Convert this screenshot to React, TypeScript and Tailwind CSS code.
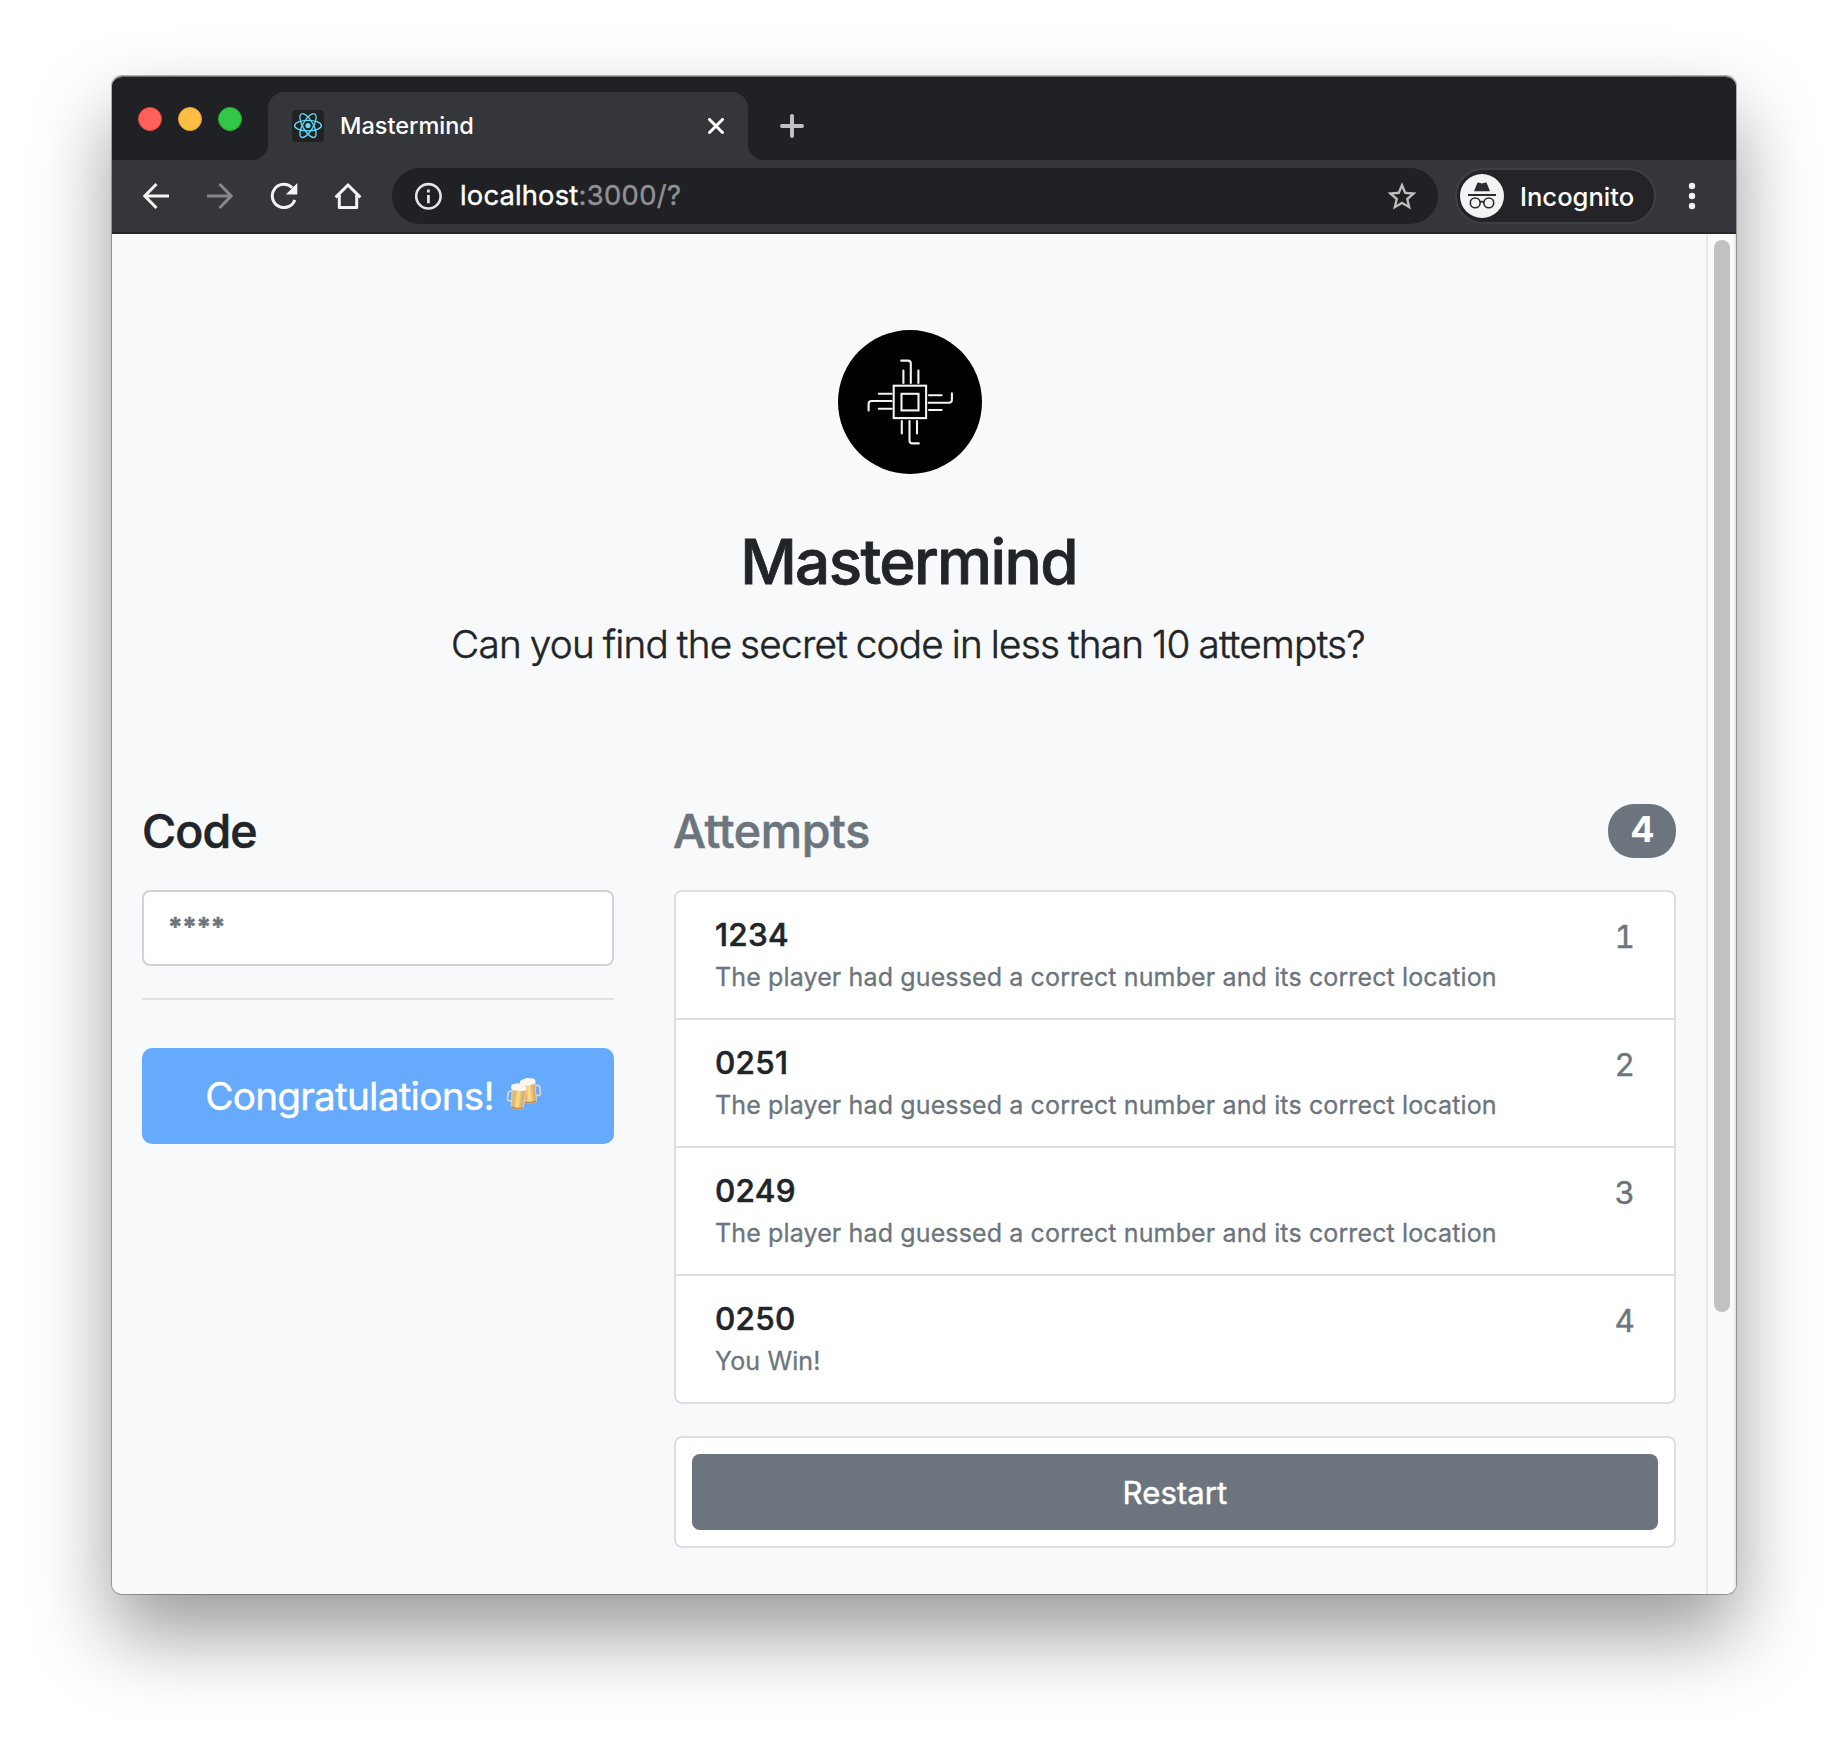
import React from "react";

type Attempt = { code: string; result: string };

const HIT = "The player had guessed a correct number and its correct location";

const attempts: Attempt[] = [
  { code: "1234", result: HIT },
  { code: "0251", result: HIT },
  { code: "0249", result: HIT },
  { code: "0250", result: "You Win!" },
];

function ReactFavicon() {
  return (
    <svg className="h-8 w-8 shrink-0" viewBox="0 0 32 32" fill="none">
      <rect width="32" height="32" rx="4" fill="#222222" />
      <g stroke="#61dafb" strokeWidth="1.35">
        <ellipse cx="16" cy="15.6" rx="13.4" ry="5.2" />
        <ellipse cx="16" cy="15.6" rx="13.4" ry="5.2" transform="rotate(60 16 15.6)" />
        <ellipse cx="16" cy="15.6" rx="13.4" ry="5.2" transform="rotate(120 16 15.6)" />
      </g>
      <circle cx="16" cy="15.6" r="2.6" fill="#61dafb" />
    </svg>
  );
}

function BackIcon() {
  return (
    <svg className="h-7 w-7 shrink-0" viewBox="0 0 28 28" fill="none" stroke="#f1f3f4" strokeWidth="3">
      <path d="M27 14H3M14.5 2 2.8 14l11.7 12" />
    </svg>
  );
}

function ForwardIcon() {
  return (
    <svg className="h-7 w-7 shrink-0" viewBox="0 0 28 28" fill="none" stroke="#86878a" strokeWidth="3">
      <path d="M1 14h24M13.5 2l11.7 12-11.7 12" />
    </svg>
  );
}

function ReloadIcon() {
  return (
    <svg className="h-7 w-7 shrink-0" viewBox="0 0 28 28" fill="none">
      <path d="M24.8 17.9A11.6 11.6 0 1 1 22.2 5.8" stroke="#f1f3f4" strokeWidth="3" />
      <path d="M27.3 1v11.6H15.8z" fill="#f1f3f4" />
    </svg>
  );
}

function HomeIcon() {
  return (
    <svg className="h-7 w-7 shrink-0" viewBox="0 0 28 28" fill="none" stroke="#f1f3f4" strokeWidth="3">
      <path d="M1.6 15.4 14 3l12.4 12.4" strokeLinejoin="miter" />
      <path d="M5.3 13v12.5h17.4V13" strokeLinejoin="round" />
    </svg>
  );
}

function InfoIcon() {
  return (
    <svg className="h-7 w-7 shrink-0" viewBox="0 0 28 28" fill="none">
      <circle cx="14.4" cy="14.3" r="12.2" stroke="#e3e4e6" strokeWidth="2.6" />
      <path d="M14.4 12.9v8.3M14.4 7.4v3" stroke="#e3e4e6" strokeWidth="2.8" />
    </svg>
  );
}

function StarIcon() {
  return (
    <svg className="h-8 w-8 shrink-0" viewBox="0 0 24 24" fill="#bdbdbd">
      <path d="M22.9 9.4l-7.9-.68L12 1.5 9 8.73 1.1 9.4l5.98 5.18L5.3 22.2 12 18.17l6.7 4.03-1.77-7.62L22.9 9.4zM12 16.1l-4.03 2.43 1.07-4.58-3.55-3.08 4.68-.41L12 6.15l1.84 4.32 4.68.41-3.55 3.08 1.07 4.58L12 16.1z" />
    </svg>
  );
}

function IncognitoIcon() {
  return (
    <svg className="h-11 w-11 shrink-0" viewBox="0 0 44 44" fill="none">
      <circle cx="22" cy="22" r="22" fill="#f1f3f4" />
      <path d="M14 17.2 17.3 9q.3-.7 1-.6l3.7 1 3.7-1q.7-.1 1 .6L30 17.2z" fill="#2b2c2f" />
      <path d="M8 21h28" stroke="#2b2c2f" strokeWidth="1.9" />
      <g stroke="#2b2c2f" strokeWidth="1.6">
        <circle cx="15.2" cy="28.9" r="4.9" />
        <circle cx="28.8" cy="28.9" r="4.9" />
        <path d="M20 28.2q2-1.1 4 0" />
      </g>
    </svg>
  );
}

function ChipLogo() {
  return (
    <svg className="h-36 w-36" viewBox="0 0 144 144" fill="none">
      <circle cx="72" cy="72" r="72" fill="#000" />
      <g stroke="#f1f4f4" strokeWidth="2.1">
        <rect x="55.7" y="55.7" width="32.4" height="32.4" />
        <rect x="63.5" y="63.8" width="17" height="16.6" />
      </g>
      <g stroke="#f1f4f4" strokeWidth="2.1" strokeLinecap="round" strokeLinejoin="round">
        <path d="M65.4 40.5V53M72.8 53V33.6q0-3-3-3H63.2M80.4 40.5V53" />
        <path d="M91 65.3h12.6M90.7 72.7h20.2q3 0 3-3V63.4M91 80h12.6" />
        <path d="M63.8 91v12.4M71.5 91v19.4q0 3 3 3h6.3M79 91v12.4" />
        <path d="M53.6 63.8H40.8M53.6 71H33.6q-3 0-3 3v6.4M53.6 78.7H40.8" />
      </g>
    </svg>
  );
}

function BeersIcon() {
  return (
    <svg className="h-10 w-[46px] shrink-0" viewBox="-1 -1 49 43" fill="none">
      <defs>
        <linearGradient id="beer" x1="0" x2="1" y1="0" y2="0">
          <stop offset="0" stopColor="#d9b98c" />
          <stop offset=".25" stopColor="#e6b765" />
          <stop offset=".5" stopColor="#fbe09a" />
          <stop offset=".75" stopColor="#e8b868" />
          <stop offset="1" stopColor="#c59f74" />
        </linearGradient>
      </defs>
      <g transform="rotate(-6 25 16)">
        <path d="M31.500 10h3q2.200 0 2.200 2.200v6.400q0 2.200-2.200 2.200h-3" stroke="#dcd7c8" strokeWidth="1.800" />
        <path d="M17.500 7h14.500l-.500 20.500q-6 1.600-12.700 0z" fill="url(#beer)" stroke="#ddd2bd" strokeWidth="1" />
        <path d="M18.800 26q6.500 1.500 12.600 0v1.700q-6 1.600-12.600 0z" fill="#b58a58" />
        <path d="M16.400 7.500q-1.800-4.800 2.800-5.300 4.300-2.400 8-.5 6.300.3 5.400 5-1.400 2.300-4.200 1.600-3 1.400-6 .2-3.600 1.800-6-1z" fill="#faf7f2" />
      </g>
      <g transform="rotate(7 13 22)">
        <path d="M6 16.500H4q-2.300 0-2.300 2.200v6q0 2.200 2.300 2.200H6" stroke="#dcd7c8" strokeWidth="1.800" />
        <path d="M5.500 13h14.500l-.500 21q-6.200 1.600-12.700 0z" fill="url(#beer)" stroke="#ddd2bd" strokeWidth="1" />
        <path d="M6.800 32.400q6.500 1.500 12.700 0v1.800q-6.300 1.600-12.700 0z" fill="#b58a58" />
        <path d="M4.400 13.500q-1.800-4.800 2.800-5.300 4.300-2.400 8-.5 6.300.3 5.400 5-1.400 2.300-4.200 1.600-3 1.400-6 .2-3.600 1.800-6-1z" fill="#faf7f2" />
      </g>
    </svg>
  );
}

function TabStrip() {
  return (
    <div className="flex h-21 items-end bg-[#202124]">
      <div className="flex h-21 w-35 items-center gap-4 pl-[26px] pt-px">
        <span className="h-6 w-6 rounded-full border border-[#e2463f] bg-[#ff605c]" />
        <span className="h-6 w-6 rounded-full border border-[#dfa034] bg-[#ffbd44]" />
        <span className="h-6 w-6 rounded-full border border-[#1fae34] bg-[#33c748]" />
      </div>
      <div className="h-4 w-4 bg-[#35363a]">
        <div className="h-4 w-4 rounded-br-2xl bg-[#202124]" />
      </div>
      <div className="flex h-17 w-[480px] items-center rounded-t-2xl bg-[#35363a] px-6">
        <ReactFavicon />
        <span className="ml-4 flex-1 text-[23.5px] font-medium leading-8 text-white">Mastermind</span>
        <svg className="h-4 w-4" viewBox="0 0 16 16" fill="none" stroke="#fff" strokeWidth="3" strokeLinecap="round">
          <path d="M1.5 1.5l13 13M14.5 1.5l-13 13" />
        </svg>
      </div>
      <div className="h-4 w-4 bg-[#35363a]">
        <div className="h-4 w-4 rounded-bl-2xl bg-[#202124]" />
      </div>
      <div className="flex h-17 items-center pl-4">
        <svg className="h-6 w-6" viewBox="0 0 24 24" fill="none" stroke="#bdc1c6" strokeWidth="4" strokeLinecap="round">
          <path d="M12 2v20M2 12h20" />
        </svg>
      </div>
    </div>
  );
}

function Toolbar() {
  return (
    <div className="flex h-[74px] items-center border-b-2 border-[#292729] bg-[#35363a] pl-[30px]">
      <div className="flex items-center gap-9">
        <BackIcon />
        <ForwardIcon />
        <ReloadIcon />
        <HomeIcon />
      </div>
      <div className="ml-[30px] flex h-14 w-[1046px] items-center rounded-full bg-[#202124] pl-[22px] pr-5">
        <InfoIcon />
        <span className="ml-[18px] flex-1 text-[27.3px] leading-9 text-white [-webkit-text-stroke-width:0.4px]">
          <span className="tracking-[0.2px]">localhost</span>
          <span className="tracking-[0.4px] text-[#8f9194]">:3000/?</span>
        </span>
        <StarIcon />
      </div>
      <div className="ml-[17px] flex h-14 w-[201px] items-center rounded-full border-2 border-[#3f4045] bg-[#242428] pl-[3px]">
        <IncognitoIcon />
        <span className="ml-4 pt-0.5 text-[25.6px] font-medium leading-9 text-white">Incognito</span>
      </div>
      <svg className="ml-8 h-7 w-2" viewBox="0 0 8 28" fill="#f1f3f4">
        <circle cx="4" cy="4" r="3.2" />
        <circle cx="4" cy="14" r="3.2" />
        <circle cx="4" cy="24" r="3.2" />
      </svg>
    </div>
  );
}

function CodePanel() {
  return (
    <section className="w-[472px]">
      <h4 className="text-[46.5px] font-medium leading-[58px] tracking-[-0.9px] [-webkit-text-stroke-width:0.6px]">Code</h4>
      <input
        placeholder="****"
        className="mt-[30px] block h-[76px] w-full rounded-lg border-2 border-[#ced4da] bg-white px-6 pb-1 text-[26px] font-bold leading-9 tracking-[-0.3px] placeholder:text-[#6c757d] placeholder:opacity-100 [-webkit-text-stroke:0.5px_#6c757d]"
      />
      <hr className="mt-8 border-t-2 border-[#dfe1e3]" />
      <button className="mt-12 flex h-24 w-full items-center justify-center gap-[11px] rounded-[10px] bg-[#66aafd] text-[38.7px] leading-[60px] tracking-[-0.75px] text-white [-webkit-text-stroke-width:0.4px]">
        Congratulations!
        <BeersIcon />
      </button>
    </section>
  );
}

function AttemptsPanel() {
  return (
    <section className="w-[1002px]">
      <div className="flex h-[58px] items-center justify-between">
        <h4 className="-ml-px text-[46.5px] font-medium leading-[58px] tracking-[-0.35px] text-[#6c757d] [-webkit-text-stroke-width:0.6px]">Attempts</h4>
        <span className="flex h-[54px] w-[68px] items-center justify-center rounded-[26px] bg-[#6c757d] pb-1 pl-px text-[36px] font-bold leading-9 text-white">
          {attempts.length}
        </span>
      </div>
      <ul className="mt-[30px] divide-y-2 divide-[#dfdfdf] rounded-lg border-2 border-[#dfdfdf] bg-white">
        {attempts.map((a, i) => (
          <li key={a.code} className="flex h-32 justify-between pl-[39px] pr-[39px] pt-6 last:h-[126px]">
            <div>
              <h6 className="text-[31.5px] font-medium leading-[38px] tracking-[0.25px] [-webkit-text-stroke-width:0.5px]">{a.code}</h6>
              <p className="mt-1 text-[25px] leading-[38px] tracking-[0.13px] text-[#6c757d] [-webkit-text-stroke-width:0.3px]">{a.result}</p>
            </div>
            <span className="pt-px text-[31.5px] leading-10 tabular-nums text-[#6c757d] [-webkit-text-stroke-width:0.4px]">{i + 1}</span>
          </li>
        ))}
      </ul>
      <div className="mt-8 flex h-28 rounded-lg border-2 border-[#dfdfdf] bg-white p-4">
        <button className="flex-1 rounded-lg bg-[#6c757d] pt-0.5 text-[31px] leading-12 tracking-[0.12px] text-white [-webkit-text-stroke-width:0.5px]">Restart</button>
      </div>
    </section>
  );
}

function Page() {
  return (
    <main className="flex flex-1 bg-[#f8f9fb] text-[#212529]">
      <div className="flex-1">
        <header className="flex flex-col items-center pt-24">
          <div className="pl-0.5">
            <ChipLogo />
          </div>
          <h2 className="mt-[50px] pr-px text-[62px] font-medium leading-[76px] tracking-[-1.65px] [-webkit-text-stroke-width:0.8px]">Mastermind</h2>
          <p className="mt-3.5 pr-0.5 text-[38.7px] font-light leading-[60px] tracking-[-0.72px] [word-spacing:-1.5px] [-webkit-text-stroke-width:0.5px]">
            Can you find the secret code in less than 10 attempts?
          </p>
        </header>
        <div className="mt-32 flex justify-between px-[30px]">
          <CodePanel />
          <AttemptsPanel />
        </div>
      </div>
      <div className="w-[30px] border-x-2 border-[#e8e8e8] bg-[#fafafa] pl-1.5 pt-1.5">
        <div className="h-[1072px] w-4 rounded-full bg-[#c1c1c1]" />
      </div>
    </main>
  );
}

export default function App() {
  return (
    <div className="h-[1742px] w-[1848px] overflow-hidden bg-white px-28 pt-19 font-['Inter',sans-serif]">
      <div className="rounded-[10px] shadow-[0_0_0_1px_rgba(0,0,0,0.28),0_40px_80px_rgba(0,0,0,0.4)]">
        <div className="flex h-[1518px] flex-col overflow-hidden rounded-[10px] border-t border-[#6b6c6e]">
          <div className="-mt-px">
            <TabStrip />
            <Toolbar />
          </div>
          <Page />
        </div>
      </div>
    </div>
  );
}
